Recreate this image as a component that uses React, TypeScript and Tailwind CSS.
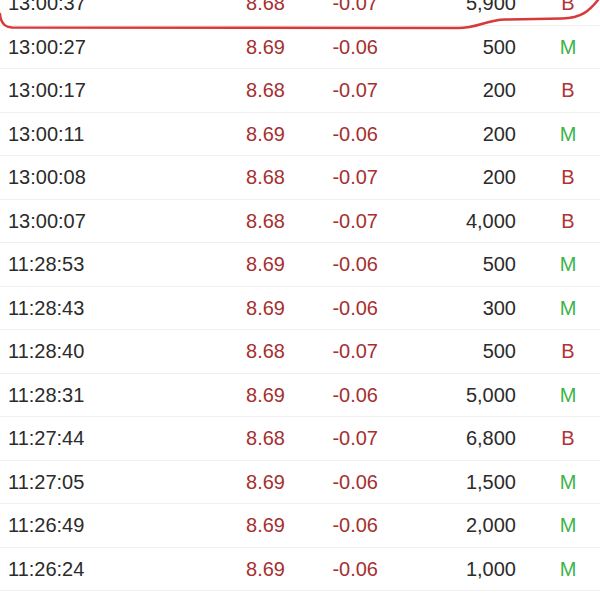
const ROWS: [string, string, string, string, 'B' | 'M'][] = [
  ['13:00:37', '8.68', '-0.07', '5,900', 'B'],
  ['13:00:27', '8.69', '-0.06', '500', 'M'],
  ['13:00:17', '8.68', '-0.07', '200', 'B'],
  ['13:00:11', '8.69', '-0.06', '200', 'M'],
  ['13:00:08', '8.68', '-0.07', '200', 'B'],
  ['13:00:07', '8.68', '-0.07', '4,000', 'B'],
  ['11:28:53', '8.69', '-0.06', '500', 'M'],
  ['11:28:43', '8.69', '-0.06', '300', 'M'],
  ['11:28:40', '8.68', '-0.07', '500', 'B'],
  ['11:28:31', '8.69', '-0.06', '5,000', 'M'],
  ['11:27:44', '8.68', '-0.07', '6,800', 'B'],
  ['11:27:05', '8.69', '-0.06', '1,500', 'M'],
  ['11:26:49', '8.69', '-0.06', '2,000', 'M'],
  ['11:26:24', '8.69', '-0.06', '1,000', 'M'],
  ['11:26:10', '8.69', '-0.06', '500', 'M'],
]

export default function App() {
  return (
    <div className="relative w-[600px] h-[600px] overflow-hidden bg-white font-['Liberation_Sans',Arial,sans-serif] text-[20px]">
      <div className="mt-[-19px]">
        {ROWS.map(([time, price, change, vol, side], i) => (
          <div key={i} className="flex items-center h-[43.5px] border-t border-[#efefef]">
            <div className="w-[190px] shrink-0 pl-[8px] text-[#2b2b2b]">{time}</div>
            <div className="w-[95px] shrink-0 text-right text-[#a5302f]">{price}</div>
            <div className="w-[93px] shrink-0 text-right text-[#a5302f]">{change}</div>
            <div className="w-[138px] shrink-0 text-right text-[#2b2b2b]">{vol}</div>
            <div className={`w-[104px] shrink-0 text-center ${side === 'B' ? 'text-[#b03434]' : 'text-[#3db34b]'}`}>{side}</div>
          </div>
        ))}
      </div>
      {/* hand-drawn circle around the top row */}
      <svg className="absolute inset-0 pointer-events-none" width="600" height="600" viewBox="0 0 600 600">
        <path
          d="M0,14 Q1,27 12,27.5 L458,28 C478,28 486,20 505,19.5 L562,18.5 C582,18 590,10 598,0"
          fill="none"
          stroke="#d8393a"
          strokeWidth="2.5"
          strokeLinecap="round"
        />
      </svg>
    </div>
  )
}
